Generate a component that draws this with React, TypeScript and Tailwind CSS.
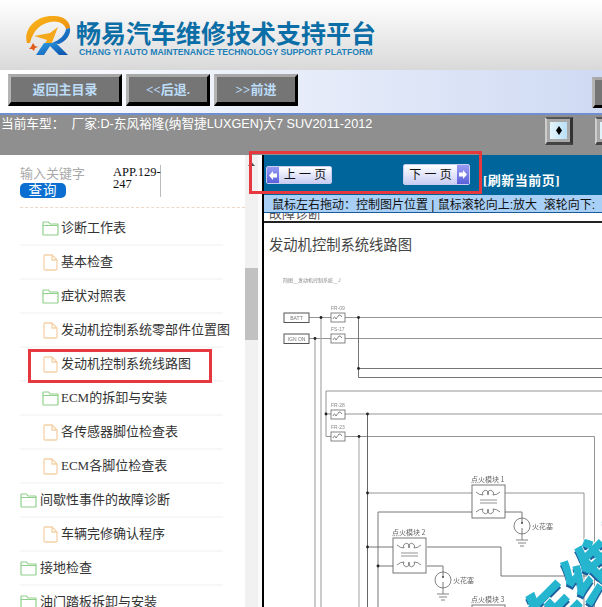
import React from "react";

const cjk = { fontFamily: '"Liberation Sans","Noto Sans CJK SC",sans-serif' };
const serif = { fontFamily: '"Liberation Serif","Noto Sans CJK SC",serif' };

function Logo() {
  return (
    <svg width="48" height="46" viewBox="24 14 48 46" className="shrink-0">
      <defs>
        <linearGradient id="sw" x1="0" y1="0" x2="1" y2="1">
          <stop offset="0" stopColor="#fbb91f" />
          <stop offset="0.6" stopColor="#f09a10" />
          <stop offset="1" stopColor="#d85a10" />
        </linearGradient>
        <linearGradient id="bl" x1="0" y1="0" x2="1" y2="1">
          <stop offset="0" stopColor="#2f9fe6" />
          <stop offset="1" stopColor="#0b4fa8" />
        </linearGradient>
      </defs>
      <path d="M27 43 C23 30 35 16 52 16 C63 15 70 21 70 28 L66 29 C65 24 58 20 50 22 C40 24 33 31 30 43 Z" fill="url(#sw)" />
      <path d="M34 36 L50 33 L58 27 L51 45 L44 45 L47 40 Z" fill="#f6a81c" />
      <path d="M33 43 L35 46 L38 47 L35 48 L34 51 L32 49 L29 49 L31 47 Z" fill="#e25a1a" />
      <path d="M70 28 C71 35 66 41 59 44 L52 43 C60 40 65 35 66 29 Z" fill="url(#bl)" />
      <path d="M36 55 L44 43 L56 43 L68 55 L59 55 L50 46 L44 55 Z" fill="url(#bl)" />
    </svg>
  );
}

function NavBtn({ w, label }: { w: string; label: string }) {
  return (
    <div
      className={`${w} h-[32px] shrink-0 flex items-center justify-center bg-[#757575] border-t-[3px] border-l-[3px] border-r-[3px] border-b-[4px] border-t-[#a8a8a8] border-l-[#b4b4b4] border-r-black border-b-black text-[13px] font-bold text-[#bcdcf8]`}
      style={serif}
    >
      {label}
    </div>
  );
}

function SquareBtn() {
  return (
    <div className="w-[28px] h-[28px] shrink-0 flex items-center justify-center bg-[#a8a8a8] border-t-2 border-l-2 border-r-[3px] border-b-[3px] border-t-[#555] border-l-[#ccc] border-r-[#333] border-b-[#444]">
      <div className="w-[17px] h-[17px] bg-gradient-to-r from-[#e4f4fb] to-[#b9e0f6] flex items-center justify-center">
        <svg width="6" height="9" viewBox="0 0 6 9"><path d="M3 0 L6 4.5 L3 9 L0 4.5 Z" fill="#000" /></svg>
      </div>
    </div>
  );
}

function FolderIcon() {
  return (
    <svg width="17" height="15" viewBox="0 0 17 15" className="shrink-0">
      <path d="M1 3 V1.5 Q1 1 1.5 1 H6.5 L8 3 H15.5 Q16 3 16 3.5 V13.5 Q16 14 15.5 14 H1.5 Q1 14 1 13.5 Z M1 4.5 H16" fill="#fff" stroke="#8fd08a" strokeWidth="1.2" />
    </svg>
  );
}

function FileIcon() {
  return (
    <svg width="15" height="17" viewBox="0 0 15 17" className="shrink-0">
      <path d="M1.5 1 H9 L14 6 V15 Q14 16 13 16 H2.5 Q1 16 1 15 V2 Q1 1 1.5 1 Z M9 1 V6 H14" fill="#fff" stroke="#f4d2a8" strokeWidth="1.3" />
    </svg>
  );
}

const rows: { t: string; kind: "folder" | "file"; top?: boolean }[] = [
  { t: "诊断工作表", kind: "folder" },
  { t: "基本检查", kind: "file" },
  { t: "症状对照表", kind: "folder" },
  { t: "发动机控制系统零部件位置图", kind: "file" },
  { t: "发动机控制系统线路图", kind: "file" },
  { t: "ECM的拆卸与安装", kind: "folder" },
  { t: "各传感器脚位检查表", kind: "file" },
  { t: "ECM各脚位检查表", kind: "file" },
  { t: "间歇性事件的故障诊断", kind: "folder", top: true },
  { t: "车辆完修确认程序", kind: "file" },
  { t: "接地检查", kind: "folder", top: true },
  { t: "油门踏板拆卸与安装", kind: "folder", top: true },
];

function PageBtn({ label, dir, cls }: { label: string; dir: "l" | "r"; cls: string }) {
  const arrow = (
    <div className="w-[12px] self-stretch bg-gradient-to-b from-[#9a9cf4] to-[#5a60d8] flex items-center justify-center shrink-0">
      <svg width="8" height="9" viewBox="0 0 8 9">
        {dir === "l" ? <path d="M0 4.5 L4 0 V2.5 H8 V6.5 H4 V9 Z" fill="#fff" /> : <path d="M8 4.5 L4 0 V2.5 H0 V6.5 H4 V9 Z" fill="#fff" />}
      </svg>
    </div>
  );
  return (
    <div className={`${cls} flex items-center border border-[#c8cdf0] bg-gradient-to-b from-[#ffffff] to-[#c9cdf2] rounded-[2px] text-[12px] text-[#111]`} style={cjk}>
      {dir === "l" && arrow}
      <span className="flex-1 text-center whitespace-pre">{label}</span>
      {dir === "r" && arrow}
    </div>
  );
}

function Fuse({ x, y, label }: { x: number; y: number; label: string }) {
  return (
    <g>
      <text x={x} y={y - 3} fontSize="5" fill="#888" fontFamily="Liberation Sans">{label}</text>
      <rect x={x} y={y} width="14" height="9" fill="#fff" stroke="#666" strokeWidth="0.8" />
      <path d={`M${x + 2} ${y + 6} q1.5 -4 3 0 l3 -4 q1 -1 3 2`} fill="none" stroke="#555" strokeWidth="0.7" />
    </g>
  );
}

function Module({ x, y, label, h }: { x: number; y: number; label: string; h: number }) {
  return (
    <g>
      <text x={x - 1} y={y - 3} fontSize="7" fill="#666" fontFamily="Noto Sans CJK SC">{label}</text>
      <rect x={x} y={y} width="33" height={h} fill="#fff" stroke="#555" strokeWidth="0.8" />
      <path d={`M${x + 4} ${y + 7} q3 3 7 3 m0 0 a3 3 0 1 1 5 0 a3 3 0 1 1 5 0 q4 0 7 -3`} fill="none" stroke="#555" strokeWidth="0.7" />
      <path d={`M${x + 8} ${y + 15} h17 M${x + 8} ${y + 18} h17`} stroke="#666" strokeWidth="0.7" />
      <path d={`M${x + 4} ${y + 27} q3 -3 7 -3 m0 0 a3 3 0 1 0 5 0 a3 3 0 1 0 5 0 q4 0 7 3`} fill="none" stroke="#555" strokeWidth="0.7" />
    </g>
  );
}

function Plug({ x, y }: { x: number; y: number }) {
  return (
    <g>
      <circle cx={x} cy={y} r="8" fill="#fff" stroke="#666" strokeWidth="0.8" />
      <path d={`M${x} ${y - 8} v5 M${x} ${y + 2} v6`} stroke="#555" strokeWidth="0.8" />
      <circle cx={x} cy={y - 3} r="1" fill="#444" />
      <path d={`M${x} ${y + 8} v6 M${x - 6} ${y + 14} h12 M${x - 4} ${y + 17} h8 M${x - 2} ${y + 20} h4`} stroke="#666" strokeWidth="0.8" fill="none" />
      <text x={x + 10} y={y + 3} fontSize="7" fill="#666" fontFamily="Noto Sans CJK SC">火花塞</text>
    </g>
  );
}

function Diagram() {
  const o = (x: number, y: number) => <circle cx={x} cy={y} r="1.4" fill="#222" />;
  return (
    <svg width="338" height="351" viewBox="264 256 338 351" className="block">
      <g style={{ filter: "blur(0.25px)" }}>
        <text x="283" y="282" fontSize="5" fill="#888" fontFamily="Noto Sans CJK SC">简图＿发动机控制系统＿J</text>
        <g stroke="#888" strokeWidth="0.9" fill="none">
          <path d="M309 317.5 H602 M309 338.5 H602" />
          <path d="M358.5 317.5 V377.5 H602 M358.5 368.5 H602" stroke="#666" />
          <path d="M321 317 V607 M315 338 V607" stroke="#aaa" strokeWidth="1.2" />
          <path d="M602 391 H326 V436.5 H331 M326 414 H331" />
          <path d="M345 414 H602 M345 436.5 H594.5 V607" />
          <path d="M359 436.5 V607" stroke="#aaa" strokeWidth="1.1" />
          <path d="M367.5 414 V607" stroke="#555" />
          <path d="M367.5 493 H472 M505 493 H584 V607" />
          <path d="M378 607 V512 H472 M505 512 H522 V520" stroke="#666" />
          <path d="M367.5 547 H393 M427 547 H501 V576 H590" stroke="#666" />
          <path d="M378 566 H393 M427 566 H443 V574" stroke="#666" />
        </g>
        <rect x="284" y="313" width="25" height="9.5" fill="#fff" stroke="#555" />
        <text x="296.5" y="320" fontSize="5" textAnchor="middle" fill="#777" fontFamily="Liberation Sans">BATT</text>
        <rect x="284" y="334" width="25" height="9.5" fill="#fff" stroke="#555" />
        <text x="296.5" y="341" fontSize="5" textAnchor="middle" fill="#777" fontFamily="Liberation Sans">IGN ON</text>
        <Fuse x={331} y={313} label="FR-09" />
        <Fuse x={331} y={334} label="FS-17" />
        <Fuse x={331} y={410} label="FR-28" />
        <Fuse x={331} y={432} label="FR-23" />
        {o(321, 317.5)}{o(315, 338.5)}{o(358.5, 317.5)}{o(358.5, 368.5)}{o(326, 414)}{o(367.5, 414)}{o(359, 436.5)}{o(367.5, 493)}{o(367.5, 547)}{o(378, 566)}
        <Module x={472} y={485} h={33} label="点火模块 1" />
        <Module x={393} y={538} h={35} label="点火模块 2" />
        <Module x={472} y={605} h={33} label="点火模块 3" />
        <Plug x={522} y={526} />
        <Plug x={443} y={580} />
      </g>
    </svg>
  );
}

export default function App() {
  return (
    <div className="relative w-[602px] h-[607px] overflow-hidden bg-white" style={cjk}>
      {/* header */}
      <div className="h-[70px] bg-gradient-to-b from-[#ffffff] to-[#d9d9d9] flex items-start pl-[24px] pt-[14px] gap-[4px]">
        <Logo />
        <div className="flex flex-col pt-[3px]">
          <div className="text-[25px] leading-[30px] font-bold text-[#0b6ea6] whitespace-nowrap" style={{ fontFamily: '"Noto Sans CJK SC",sans-serif' }}>畅易汽车维修技术支持平台</div>
          <div className="text-[8.7px] leading-[11px] font-bold text-[#1c7fb8] whitespace-nowrap pl-[3px]" style={{ fontFamily: '"Liberation Sans",sans-serif' }}>CHANG YI AUTO MAINTENANCE TECHNOLOGY SUPPORT PLATFORM</div>
        </div>
      </div>
      {/* nav */}
      <div className="h-[45px] bg-gradient-to-r from-[#ffffff] to-[#cfdaf3] border-b-2 border-b-[#6f8fd0] flex items-start pl-[8px] pt-[4px] gap-[4px] overflow-hidden">
        <NavBtn w="w-[114px]" label="返回主目录" />
        <NavBtn w="w-[84px]" label="<<后退." />
        <NavBtn w="w-[84px]" label=">>前进" />
        <div className="ml-[290px] mt-[3px] w-[12px] h-[31px] shrink-0 overflow-hidden">
          <NavBtn w="w-[84px]" label="主" />
        </div>
      </div>
      {/* model strip */}
      <div className="h-[40px] bg-[#8f8f8f] flex items-start">
        <div className="w-[545px] shrink-0 pl-[1px] pt-[1px] text-[12.7px] leading-[16px] text-white whitespace-pre overflow-hidden">当前车型：  厂家:D-东风裕隆(纳智捷LUXGEN)大7 SUV2011-2012</div>
        <div className="pt-[2px] flex gap-[22px] shrink-0">
          <SquareBtn />
          <SquareBtn />
        </div>
      </div>
      {/* main */}
      <div className="flex h-[452px]">
        {/* sidebar */}
        <div className="w-[245px] shrink-0 overflow-hidden pl-[20px]">
          <div className="flex h-[53px] pt-[10px] border-b border-dashed border-b-[#ecd8c8]">
            <div className="w-[93px] flex flex-col">
              <div className="text-[13px] leading-[18px] text-[#aaa] whitespace-nowrap">输入关键字</div>
              <div className="w-[46px] h-[15px] rounded-[5px] bg-[#0a6fd0] text-white text-[13.5px] leading-[15px] text-center tracking-[1px]">查询</div>
            </div>
            <div className="w-[48px] h-[32px] border-r border-r-[#bbb] text-[12.5px] leading-[12px] text-[#111] pt-[1px] whitespace-nowrap" style={serif}>APP.129-<br />247</div>
          </div>
          <div className="w-[203px] mt-[4px]">
            {rows.map((r) => (
              <div key={r.t} className={`h-[34px] flex items-center border-b-2 border-b-[#f7f7f7] whitespace-nowrap text-[13px] text-[#333] ${r.top ? "pl-0 gap-[3px]" : r.kind === "folder" ? "pl-[22px] gap-[2px]" : "pl-[23px] gap-[3px]"}`} style={serif}>
                {r.kind === "folder" ? <FolderIcon /> : <FileIcon />}
                <span>{r.t}</span>
              </div>
            ))}
          </div>
        </div>
        {/* scrollbar */}
        <div className="w-[13px] shrink-0 bg-[#f1f1f1] flex flex-col items-center pt-[7px]">
          <svg width="7" height="4" viewBox="0 0 7 4"><path d="M3.5 0 L7 4 H0 Z" fill="#505050" /></svg>
          <div className="mt-[102px] w-full h-[72px] bg-[#c1c1c1]" />
        </div>
        <div className="w-[4px] shrink-0 bg-[#fafafa]" />
        {/* content */}
        <div className="flex-1 min-w-0 overflow-hidden border-l-2 border-l-black">
          <div className="h-[40px] bg-[#00659a] relative flex items-start pl-[2px] pt-[11px] whitespace-nowrap">
            <PageBtn label="上 一 页" dir="l" cls="w-[66px] h-[18px] shrink-0" />
            <PageBtn label="下 一 页" dir="r" cls="w-[67px] h-[21px] ml-[71px] -mt-[2px] shrink-0" />
            <div className="ml-[13px] mt-[7px] text-[13px] leading-[16px] font-bold text-white tracking-[0.5px]" style={serif}>[刷新当前页]</div>
          </div>
          <div className="h-[18px] bg-[#a8cff5] border-b border-b-[#1a5a9a] text-[12px] leading-[20px] text-[#111] whitespace-pre pl-[8px] overflow-hidden">鼠标左右拖动：控制图片位置 | 鼠标滚轮向上:放大  滚轮向下:</div>
          <div className="h-[8px] overflow-hidden border-b-2 border-b-[#222] box-content pl-[5px] text-[13px] text-[#555]"><div className="-mt-[6px] leading-[14px]">故障诊断</div></div>
          <div className="h-[33px] pl-[5px] pt-[12px] text-[14.3px] leading-[18px] text-[#444] whitespace-nowrap" style={{ fontFamily: '"Noto Sans CJK SC",sans-serif' }}>发动机控制系统线路图</div>
          <Diagram />
        </div>
      </div>
      {/* watermark over content */}
      <div className="absolute left-[503px] top-[538px] -rotate-[45deg] text-[58px] leading-[60px] font-black text-[#25b5cf] whitespace-nowrap [text-shadow:1px_-1px_0_#fff,-2px_2px_0_#1c5f9c]" style={{ fontFamily: '"Noto Sans CJK SC",sans-serif' }}>车维修</div>
      {/* red annotations */}
      <div className="absolute left-[249px] top-[151px] w-[233px] h-[43px] border-[3px] border-[#e5393f]" />
      <div className="absolute left-[28px] top-[349px] w-[184px] h-[34px] border-[3px] border-[#e5393f]" />
    </div>
  );
}
